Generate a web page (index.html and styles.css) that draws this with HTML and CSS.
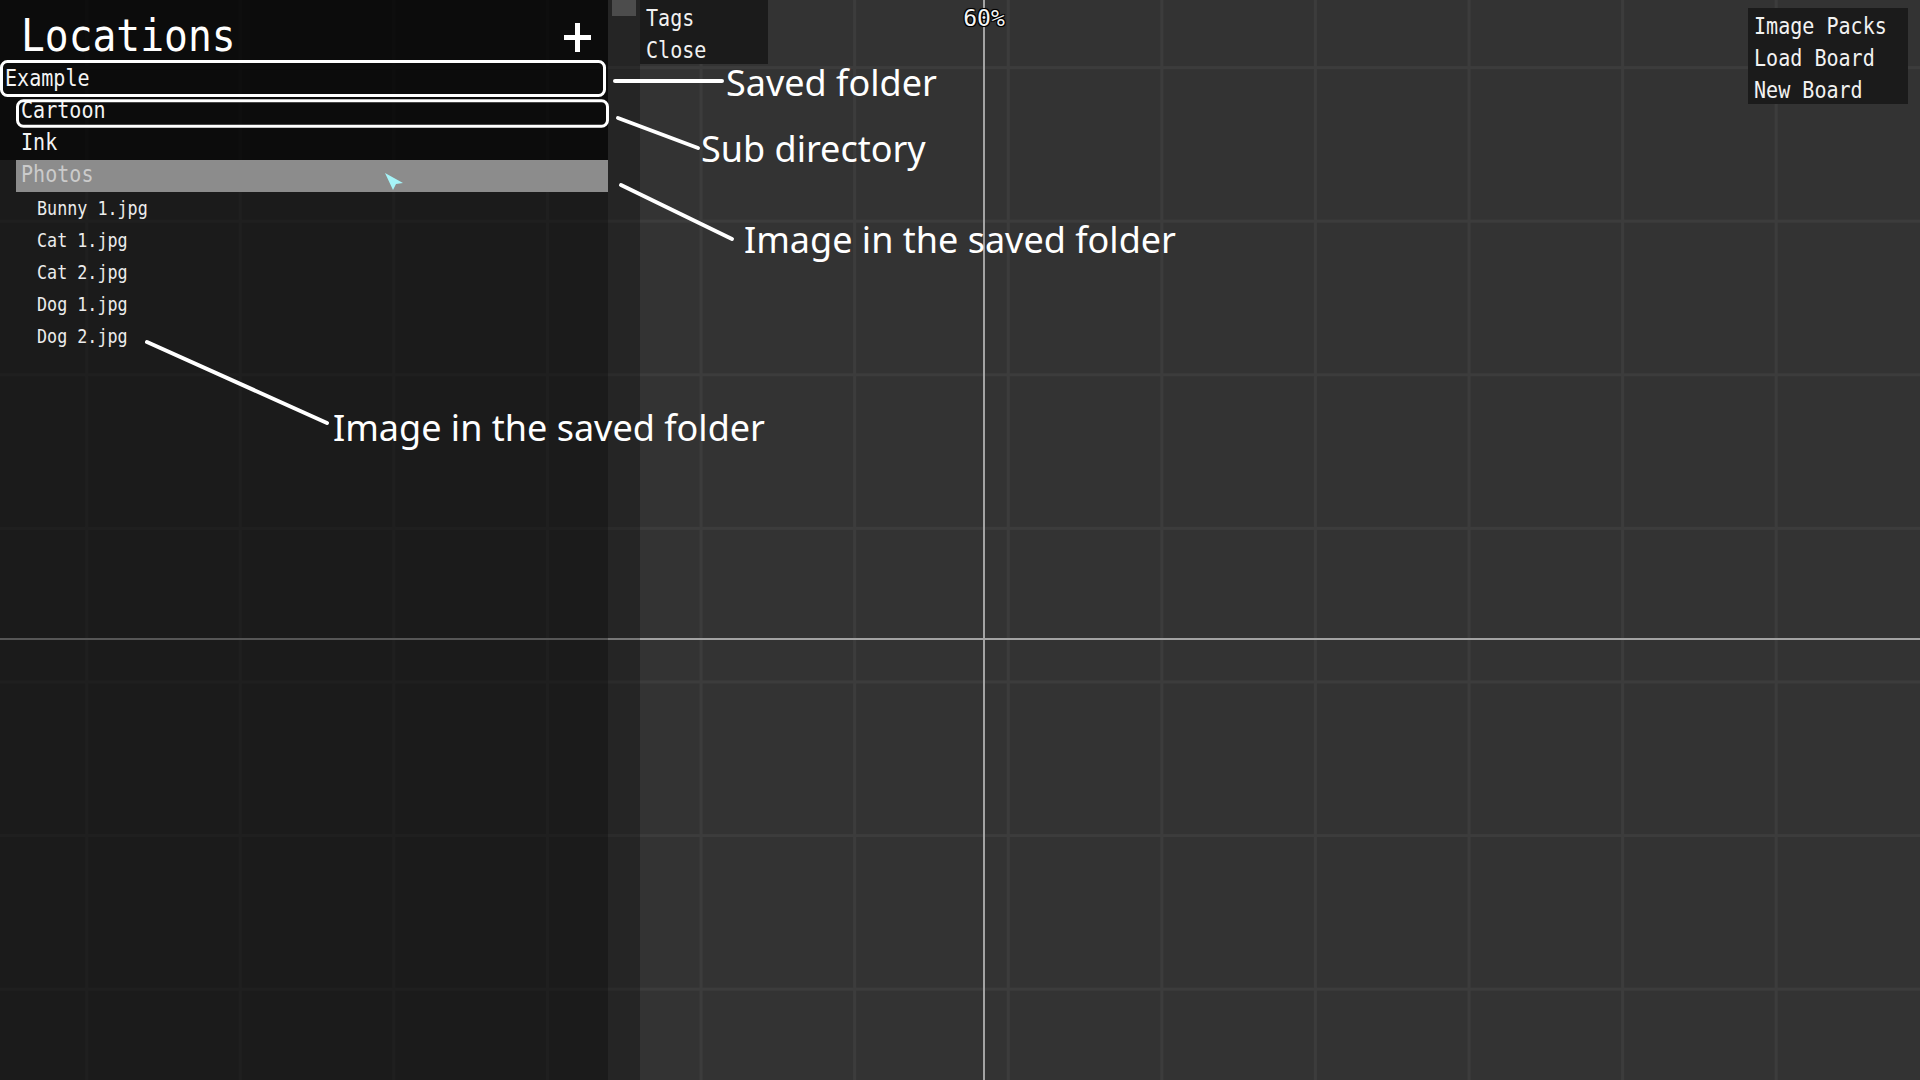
FILE: index.html
```html
<!DOCTYPE html>
<html lang="en">
<head>
<meta charset="utf-8">
<title>Locations</title>
<link rel="stylesheet" href="styles.css">
</head>
<body>
<div class="app">
  <aside class="panel">
    <div class="top">
      <header class="head">
        <h1 class="title">Locations</h1>
        <svg class="plus" width="27" height="29" viewBox="0 0 27 29"><rect x="11" y="0" width="5" height="29" fill="#fff"/><rect x="0" y="12" width="27" height="5" fill="#fff"/></svg>
      </header>
      <div class="row"><span class="t">Example</span></div>
      <div class="row sub"><span class="t">Cartoon</span></div>
      <div class="row sub"><span class="t">Ink</span></div>
    </div>
    <div class="row sub sel"><span class="t">Photos</span></div>
    <ul class="files">
      <li><span class="t">Bunny 1.jpg</span></li>
      <li><span class="t">Cat 1.jpg</span></li>
      <li><span class="t">Cat 2.jpg</span></li>
      <li><span class="t">Dog 1.jpg</span></li>
      <li><span class="t">Dog 2.jpg</span></li>
    </ul>
  </aside>
  <div class="scroll"><div class="thumb"></div></div>
  <main class="canvas">
    <nav class="menu tags">
      <div class="item"><span class="t">Tags</span></div>
      <div class="item"><span class="t">Close</span></div>
    </nav>
    <div class="zoom">60%</div>
    <nav class="menu board">
      <div class="item"><span class="t">Image Packs</span></div>
      <div class="item"><span class="t">Load Board</span></div>
      <div class="item"><span class="t">New Board</span></div>
    </nav>
  </main>
</div>
<svg class="cursor" width="20" height="18" viewBox="0 0 20 18"><polygon points="0,0 18,10 11,11 8,17" fill="#a6f4f8"/></svg>
<svg class="notes" width="1920" height="1080" viewBox="0 0 1920 1080">
  <rect x="1.5" y="61.5" width="603" height="34" rx="6" class="box"/>
  <rect x="17.5" y="100.8" width="590" height="25.5" rx="6" class="box"/>
  <line x1="615" y1="81" x2="722" y2="81" class="lead"/>
  <line x1="618" y1="118" x2="698" y2="148" class="lead"/>
  <line x1="621" y1="185" x2="732" y2="239" class="lead"/>
  <line x1="147" y1="342" x2="327" y2="423" class="lead"/>
  <text x="726" y="96" class="label">Saved folder</text>
  <text x="701" y="162" class="label">Sub directory</text>
  <text x="744" y="253" class="label">Image in the saved folder</text>
  <text x="333" y="441" class="label">Image in the saved folder</text>
</svg>
</body>
</html>
```
FILE: styles.css
```css
* { box-sizing: border-box; margin: 0; padding: 0; }
html, body { width: 1920px; height: 1080px; overflow: hidden; }
body {
  position: relative;
  font-family: "DejaVu Sans Mono", monospace;
  color: #f2f2f2;
  background-color: #333333;
  background-image:
    linear-gradient(#a3a3a3, #a3a3a3),
    linear-gradient(#a3a3a3, #a3a3a3),
    linear-gradient(to right, #3c3c3c 3px, transparent 3px),
    linear-gradient(to bottom, #3c3c3c 3px, transparent 3px);
  background-size: 2px 100%, 100% 2px, 153.6px 100%, 100% 153.6px;
  background-position: 983px 0, 0 638px, 85.2px 0, 0 66.1px;
  background-repeat: no-repeat, no-repeat, repeat-x, repeat-y;
}
.app { display: flex; height: 1080px; }
.t { display: inline-block; transform: scaleX(.88); transform-origin: left center; white-space: nowrap; }

.panel { width: 608px; flex: none; background: rgba(0,0,0,.47); display: flex; flex-direction: column; }
.top { background: rgba(0,0,0,.52); }
.head { height: 64px; display: flex; justify-content: space-between; align-items: flex-start; padding: 0 17px 0 21px; }
.title { font-size: 45px; line-height: 48px; padding-top: 12px; font-weight: normal; color: #fff; transform: scaleX(.88); transform-origin: left center; }
.plus { margin-top: 23px; }

.row { height: 32px; font-size: 22.8px; line-height: 28px; padding-left: 5px; white-space: nowrap; color: #f4f4f4; }
.sub { margin-left: 16px; }
.sel { background: #8c8c8c; color: #cbcbcb; }

.files { list-style: none; padding-left: 37px; }
.files li { height: 32px; font-size: 19px; line-height: 29px; padding-top: 2px; color: #ececec; }

.scroll { width: 32px; flex: none; background: rgba(0,0,0,.27); padding-left: 4px; }
.thumb { width: 24px; height: 16px; background: #4c4c4c; }

.canvas { flex: 1; position: relative; display: flex; justify-content: space-between; align-items: flex-start; }
.menu { background: #1b1b1b; }
.menu .item { height: 32px; font-size: 22.8px; line-height: 28px; padding: 4px 0 0 6px; color: #f2f2f2; }
.tags { width: 128px; }
.board { width: 160px; margin: 8px 12px 0 0; }

.zoom {
  position: absolute; left: 344px; top: 4px; transform: translateX(-50%);
  font-size: 23px; line-height: 28px; color: #f4f4f4;
  text-shadow: 1px 1px 0 #000, -1px -1px 0 #000, 1px -1px 0 #000, -1px 1px 0 #000, 0 0 2px #000;
}

.cursor { position: absolute; left: 385px; top: 173px; }
.notes { position: absolute; left: 0; top: 0; pointer-events: none; }
.box { fill: none; stroke: #fff; stroke-width: 3; }
.lead { stroke: #fff; stroke-width: 4; stroke-linecap: round; }
.label { font-family: "Noto Sans", "Open Sans", sans-serif; font-size: 36px; fill: #fff; }
```
